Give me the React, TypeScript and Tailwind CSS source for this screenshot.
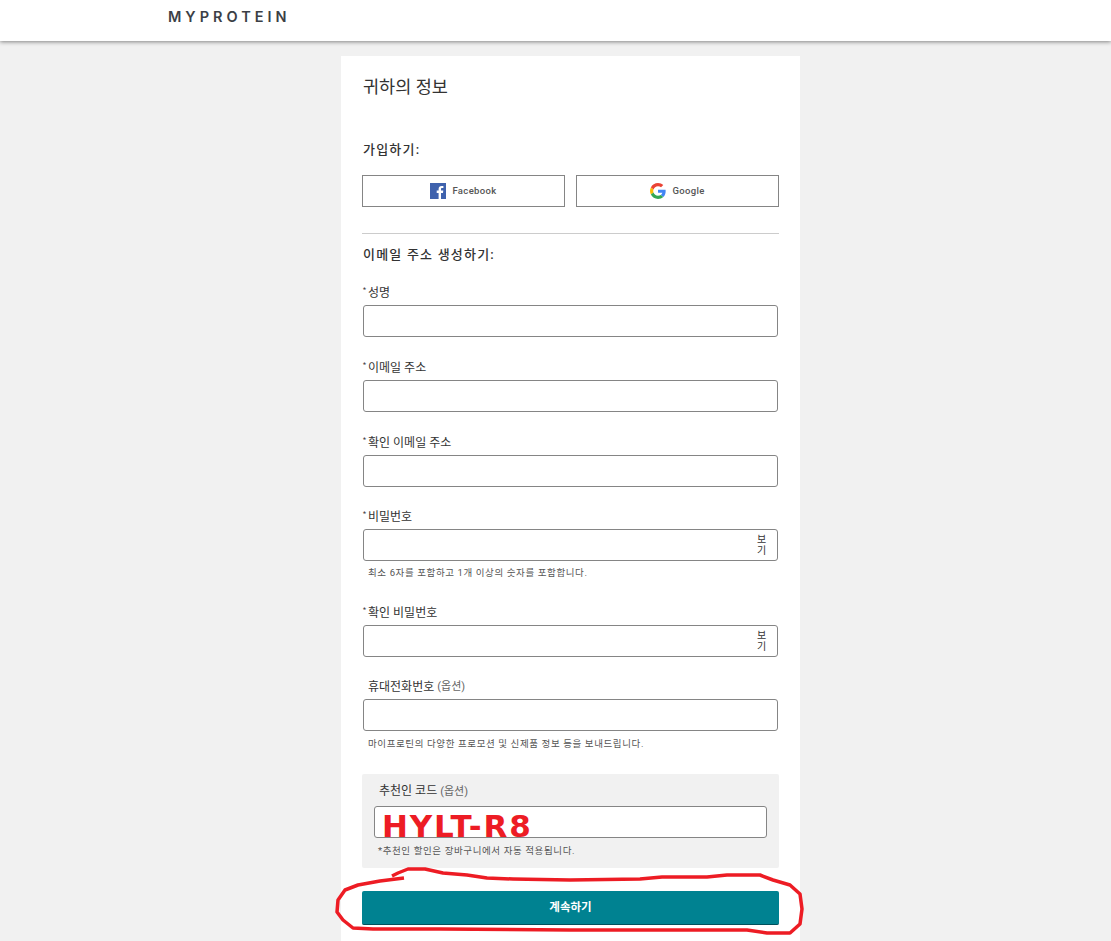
const FONT = "font-['Roboto','Noto_Sans_CJK_KR',sans-serif]";

function Label({ text, req = true, note }: { text: string; req?: boolean; note?: string }) {
  return (
    <div className="flex h-4 items-center pl-[5px] text-[12px] leading-4 text-[#333]">
      {req && <span className="absolute -ml-[5px] -mt-[6px] text-[7px] leading-none">*</span>}
      <span>{text}</span>
      {note && <span className="ml-[3px] text-[11px] text-[#666]">{note}</span>}
    </div>
  );
}

function Input({ show }: { show?: boolean }) {
  return (
    <div className="mt-1 flex h-8 items-center justify-end rounded-[3px] border border-[#858585] bg-white pr-[12px]">
      {show && <span className="w-[8px] text-center text-[10px] leading-[11px] text-[#333]">보 기</span>}
    </div>
  );
}

function Hint({ children, className }: { children: string; className: string }) {
  return <p className={`pl-[5px] text-[9.5px] leading-[12px] tracking-[0.6px] text-[#555] ${className}`}>{children}</p>;
}

function FacebookIcon() {
  return (
    <svg width="16" height="16" viewBox="0 0 16 16">
      <rect width="16" height="16" fill="#3f62ad" />
      <path d="M11 16V10h2l.3-2.4H11V6.2c0-.7.2-1.1 1.2-1.1h1.2V3c-.3 0-1-.1-1.8-.1-1.8 0-3 1.100-3 3.100v1.600H6.700V10H8.600v6z" fill="#fff" />
    </svg>
  );
}

function GoogleIcon() {
  return (
    <svg width="16" height="16" viewBox="0 0 48 48">
      <path fill="#EA4335" d="M24 9.500c3.500 0 6.700 1.300 9.100 3.500l6.800-6.800C35.800 2.400 30.300 0 24 0 14.600 0 6.500 5.400 2.600 13.200l7.900 6.200C12.400 13.700 17.700 9.500 24 9.500z" />
      <path fill="#4285F4" d="M47 24.500c0-1.600-.1-3.100-.4-4.500H24v9h13c-.6 3-2.300 5.500-4.800 7.200l7.700 6c4.500-4.200 7.100-10.300 7.100-17.700z" />
      <path fill="#FBBC05" d="M10.500 28.600c-.5-1.400-.8-3-.8-4.600s.3-3.200.8-4.600l-7.900-6.200C.9 16.500 0 20.100 0 24s.9 7.500 2.600 10.800z" />
      <path fill="#34A853" d="M24 48c6.500 0 11.900-2.100 15.900-5.800l-7.700-6c-2.200 1.500-4.900 2.300-8.200 2.300-6.300 0-11.600-4.200-13.500-9.900l-7.900 6.200C6.500 42.600 14.600 48 24 48z" />
    </svg>
  );
}

function SocialButton({ icon, name }: { icon: React.ReactNode; name: string }) {
  return (
    <button className="flex h-8 flex-1 items-center justify-center gap-[6px] border border-[#858585] bg-white text-[9.5px] font-medium tracking-[0.35px] text-[#555]">
      {icon}
      {name}
    </button>
  );
}

export default function App() {
  return (
    <div className={`relative h-[941px] overflow-hidden bg-[#f1f1f1] ${FONT}`}>
      <header className="h-[41px] bg-white pl-[168px] shadow-[0_1px_4px_rgba(0,0,0,0.45)]">
        <span className="block pt-[9px] font-['Inter',sans-serif] text-[14.5px] leading-4 font-semibold tracking-[4px] text-[#3c3f46]">MYPROTEIN</span>
      </header>

      <main className="mt-[15px] ml-[341px] h-[900px] w-[459px] bg-white pt-[21px] pr-[21px] pl-[21px]">
        <h1 className="pl-px text-[17.5px] leading-5 text-[#333]">귀하의 정보</h1>
        <h2 className="mt-[45px] pl-px text-[13px] leading-4 font-medium tracking-[1.2px] text-[#333]">가입하기:</h2>
        <div className="mt-[17px] flex gap-[11px]">
          <SocialButton icon={<FacebookIcon />} name="Facebook" />
          <SocialButton icon={<GoogleIcon />} name="Google" />
        </div>
        <div className="mt-[26px] h-px bg-[#ccc]" />
        <h2 className="mt-[13px] pl-px text-[13px] leading-4 font-medium tracking-[1.2px] text-[#333]">이메일 주소 생성하기:</h2>

        <div className="mt-[22px] px-px">
          <Label text="성명" />
          <Input />
          <div className="mt-[23px]"><Label text="이메일 주소" /><Input /></div>
          <div className="mt-[23px]"><Label text="확인 이메일 주소" /><Input /></div>
          <div className="mt-[22px]"><Label text="비밀번호" /><Input show /></div>
          <Hint className="mt-[6px]">최소 6자를 포함하고 1개 이상의 숫자를 포함합니다.</Hint>
          <div className="mt-[26px]"><Label text="확인 비밀번호" /><Input show /></div>
          <div className="mt-[22px]"><Label text="휴대전화번호" req={false} note="(옵션)" /><Input /></div>
          <Hint className="mt-[7px]">마이프로틴의 다양한 프로모션 및 신제품 정보 등을 보내드립니다.</Hint>
        </div>

        <section className="mt-[24px] h-[94px] rounded-[2px] bg-[#f1f1f1] px-[12px] pt-[9px]">
          <div className="pl-[5px] text-[12px] leading-4 text-[#333]">추천인 코드 <span className="text-[11px] text-[#666]">(옵션)</span></div>
          <div className="relative mt-[6px] h-8 rounded-[3px] border border-[#858585] bg-white">
            <span className="absolute top-px left-[7px] font-['DejaVu_Sans',sans-serif] text-[31px] leading-9 font-bold tracking-[1.8px] text-[#ed1c24]">HYLT-R8</span>
          </div>
          <p className="mt-[7px] pl-[4px] text-[9.500px] leading-[12px] tracking-[0.6px] text-[#555]">*추천인 할인은 장바구니에서 자동 적용됩니다.</p>
        </section>

        <button className="mt-[23px] h-[34px] w-full rounded-[2px] border-b border-[#00505c] bg-[#008291] text-[11.500px] font-bold text-white">계속하기</button>
      </main>

      <svg className="pointer-events-none absolute inset-0" width="1111" height="941" viewBox="0 0 1111 941" fill="none">
        <path
          d="M392 876 L398 873 L408 869 L425 869 L443 873 L467 875 L487 878 L513 879 L570 880 L640 879 L662 877 L707 877 L727 875 L760 875 L773 880 L790 885 L800 894 L802 909 L800 924 L790 933 L767 933 L747 930 L663 930 L570 930 L440 929 L373 929 L353 928 L343 920 L337 912 L338 900 L345 890 L358 885 L380 881 L404 878"
          stroke="#ed1c24"
          strokeWidth="3.5"
          strokeLinejoin="round"
        />
      </svg>
    </div>
  );
}
